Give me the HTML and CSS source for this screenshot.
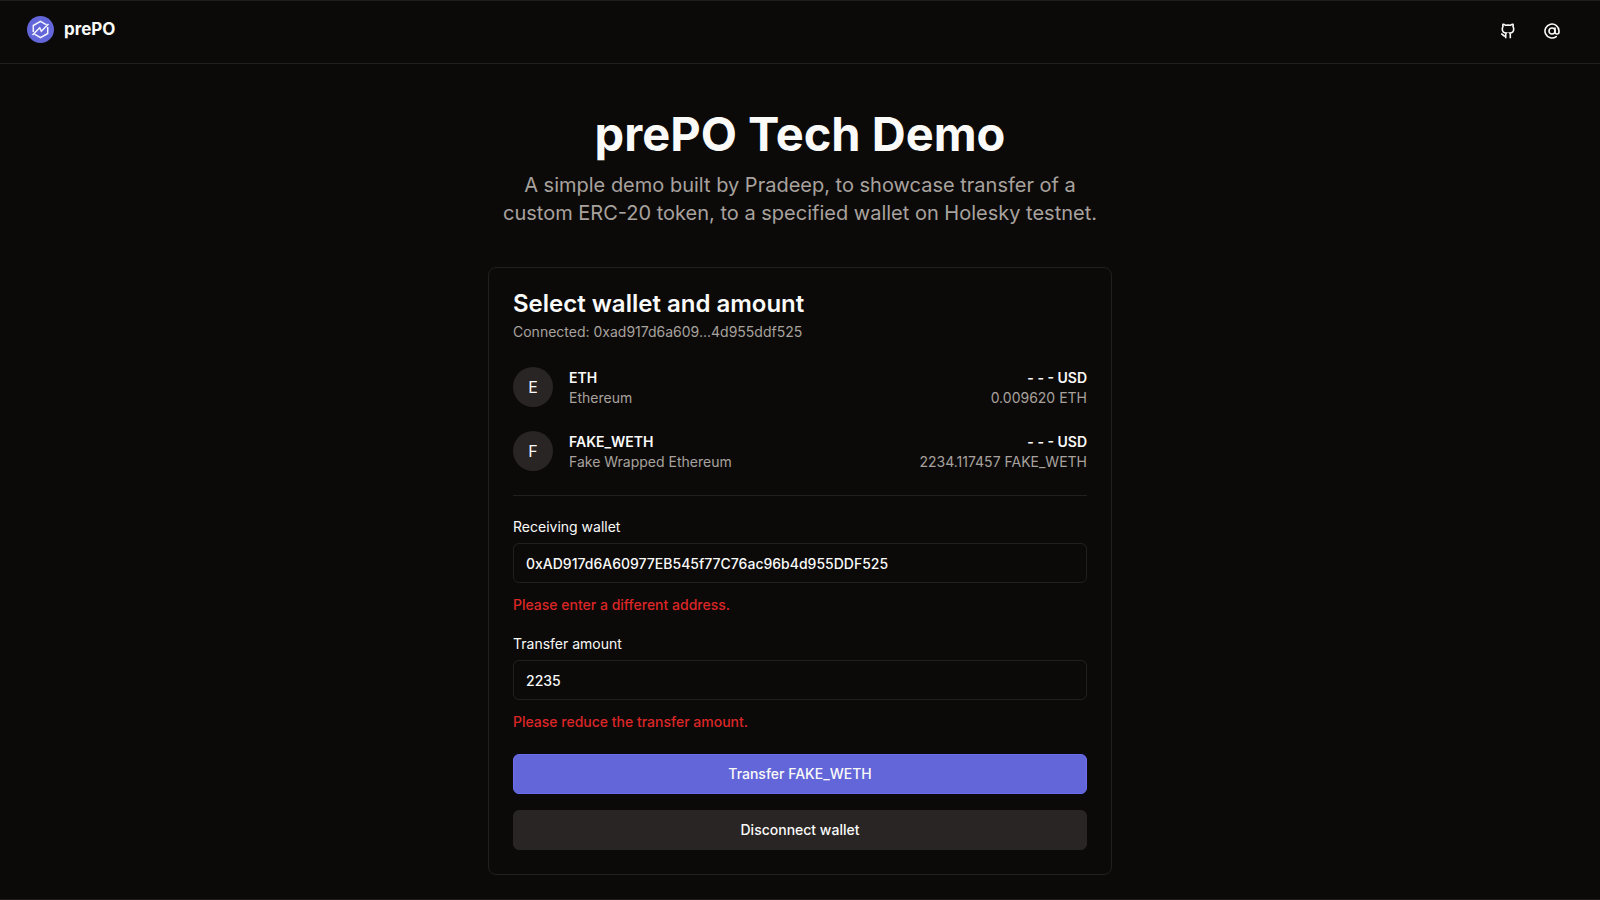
FILE: index.html
```html
<!DOCTYPE html>
<html lang="en">
<head>
<meta charset="utf-8">
<meta name="viewport" content="width=device-width, initial-scale=1">
<title>prePO Tech Demo</title>
<link rel="stylesheet" href="styles.css">
</head>
<body>
<header class="site-header">
  <a class="brand" href="#">
    <svg class="brand-logo" viewBox="0 0 28 28" aria-hidden="true">
      <circle cx="14.500" cy="14.500" r="13.5" fill="#6366d8"/>
      <g fill="none" stroke="#f5f5ff" stroke-width="1.5">
        <path d="M7.300 17V10.500L14.500 6.300L20.500 9.800"/>
        <path d="M21.700 12V18.500L14.500 22.700L8.500 19.200"/>
        <path d="M6.500 20.100L13.700 12.700L15.300 16.300L22.500 8.900"/>
      </g>
    </svg>
    <span class="brand-name">prePO</span>
  </a>
  <nav class="site-links" aria-label="Links">
    <a class="icon-link" href="#" aria-label="GitHub">
      <svg viewBox="0 0 16 16" width="16" height="16" aria-hidden="true"><path d="M5.700 15.200V11.600C5.700 10.900 5.900 10.400 6.300 10C3.700 9.800 2.300 8.600 2.300 6.200C2.300 5.100 2.500 4.200 3 3.500C2.700 2.800 2.700 2 3 1.300C4.100 1.400 4.900 1.800 5.600 2.300C7.200 2 8.800 2 10.400 2.300C11.100 1.800 11.900 1.400 13 1.300C13.300 2 13.300 2.800 13 3.500C13.500 4.200 13.700 5.100 13.700 6.200C13.700 8.600 12.300 9.800 9.700 10C10.100 10.400 10.300 10.900 10.300 11.600V15.200M5.700 13.200C3.300 13.500 3.300 11.300 1.200 10.900" fill="none" stroke="currentColor" stroke-width="1.600"/></svg>
    </a>
    <a class="icon-link" href="#" aria-label="Email">
      <svg viewBox="0 0 24 24" width="16" height="16" fill="none" stroke="currentColor" stroke-width="2.400" stroke-linecap="round" stroke-linejoin="round" aria-hidden="true"><circle cx="12" cy="12" r="4.500"/><path d="M16.500 7.500v6a3 3 0 0 0 6 0v-1.500a10.500 10.500 0 1 0-4.200 8.400"/></svg>
    </a>
  </nav>
</header>
<main class="page">
  <section class="hero">
    <h1 class="hero-title">prePO Tech Demo</h1>
    <p class="hero-text">A simple demo built by Pradeep, to showcase transfer of a<br>custom ERC-20 token, to a specified wallet on Holesky testnet.</p>
  </section>
  <section class="card">
    <div class="card-head">
      <h2 class="card-title">Select wallet and amount</h2>
      <p class="muted">Connected: 0xad917d6a609...4d955ddf525</p>
    </div>
    <ul class="tokens">
      <li class="token">
        <span class="avatar">E</span>
        <div class="token-info"><p class="strong">ETH</p><p class="muted">Ethereum</p></div>
        <div class="token-value"><p class="strong">- - - USD</p><p class="muted">0.009620 ETH</p></div>
      </li>
      <li class="token">
        <span class="avatar">F</span>
        <div class="token-info"><p class="strong">FAKE_WETH</p><p class="muted">Fake Wrapped Ethereum</p></div>
        <div class="token-value"><p class="strong">- - - USD</p><p class="muted">2234.117457 FAKE_WETH</p></div>
      </li>
    </ul>
    <form class="form">
      <div class="field">
        <label class="label" for="wallet">Receiving wallet</label>
        <input class="input" id="wallet" type="text" value="0xAD917d6A60977EB545f77C76ac96b4d955DDF525" aria-describedby="wallet-error">
        <p class="error" id="wallet-error">Please enter a different address.</p>
      </div>
      <div class="field">
        <label class="label" for="amount">Transfer amount</label>
        <input class="input" id="amount" type="text" value="2235" aria-describedby="amount-error">
        <p class="error" id="amount-error">Please reduce the transfer amount.</p>
      </div>
      <div class="actions">
        <button class="button button-primary" type="button">Transfer FAKE_WETH</button>
        <button class="button button-secondary" type="button">Disconnect wallet</button>
      </div>
    </form>
  </section>
</main>
</body>
</html>
```
FILE: styles.css
```css
* {
  box-sizing: border-box;
}

body {
  margin: 0;
  min-height: 100vh;
  background: #0c0a09;
  color: #fafaf9;
  font: 14px/20px Inter, "Liberation Sans", sans-serif;
  border: solid #1f1c1b;
  border-width: 1px 0;
}

h1, h2, p, ul {
  margin: 0;
  padding: 0;
}

.site-header {
  display: flex;
  align-items: center;
  justify-content: space-between;
  padding: 14px 40px 20px 26px;
  border-bottom: 1px solid #231f1e;
}

.brand {
  display: flex;
  align-items: center;
  gap: 10px;
  color: inherit;
  text-decoration: none;
}

.brand-logo {
  width: 28px;
  height: 28px;
}

.brand-name {
  font-size: 17px;
  font-weight: 700;
}

.site-links {
  display: flex;
  gap: 28px;
  padding-top: 3px;
}

.icon-link {
  display: flex;
  color: inherit;
}

.page {
  display: flex;
  flex-direction: column;
  align-items: center;
  gap: 40px;
  padding: 46px 24px 20px;
}

.hero {
  text-align: center;
}

.hero-title {
  font-size: 47px;
  line-height: 48px;
  font-weight: 700;
}

.hero-text {
  margin-top: 13px;
  color: #a8a29e;
  font-size: 20px;
  line-height: 28px;
}

.card {
  width: 100%;
  max-width: 624px;
  padding: 24px;
  border: 1px solid #231f1e;
  border-radius: 8px;
}

.card-title {
  font-size: 24px;
  line-height: 24px;
  font-weight: 600;
  margin-bottom: 6px;
}

.muted {
  color: #a8a29e;
}

.strong {
  font-weight: 600;
}

.tokens {
  display: grid;
  gap: 22px;
  padding: 24px 0 23px;
  border-bottom: 1px solid #231f1e;
  list-style: none;
}

.token {
  display: flex;
  align-items: center;
  gap: 16px;
}

.avatar {
  display: grid;
  place-items: center;
  width: 40px;
  height: 40px;
  border-radius: 50%;
  background: #292524;
  font-size: 16px;
}

.token-info,
.token-value {
  padding-top: 2px;
}

.token-info {
  flex: 1;
}

.token-value {
  text-align: right;
}

.form {
  display: grid;
  gap: 22px;
  padding-top: 24px;
}

.field {
  display: grid;
}

.label {
  line-height: 14px;
  margin-bottom: 9px;
}

.input {
  width: 100%;
  height: 40px;
  padding: 0 12px;
  border: 1px solid #231f1e;
  border-radius: 6px;
  background: transparent;
  color: inherit;
  font: inherit;
  font-weight: 500;
}

.error {
  margin-top: 12px;
  color: #dc2626;
  font-weight: 500;
}

.actions {
  display: grid;
  gap: 16px;
}

.button {
  height: 40px;
  border: 1px solid #292524;
  border-radius: 6px;
  background: #292524;
  color: #fafaf9;
  font: inherit;
  font-weight: 500;
}

.button-primary {
  border-color: #6b6df0;
  background: #6366d8;
}
```
